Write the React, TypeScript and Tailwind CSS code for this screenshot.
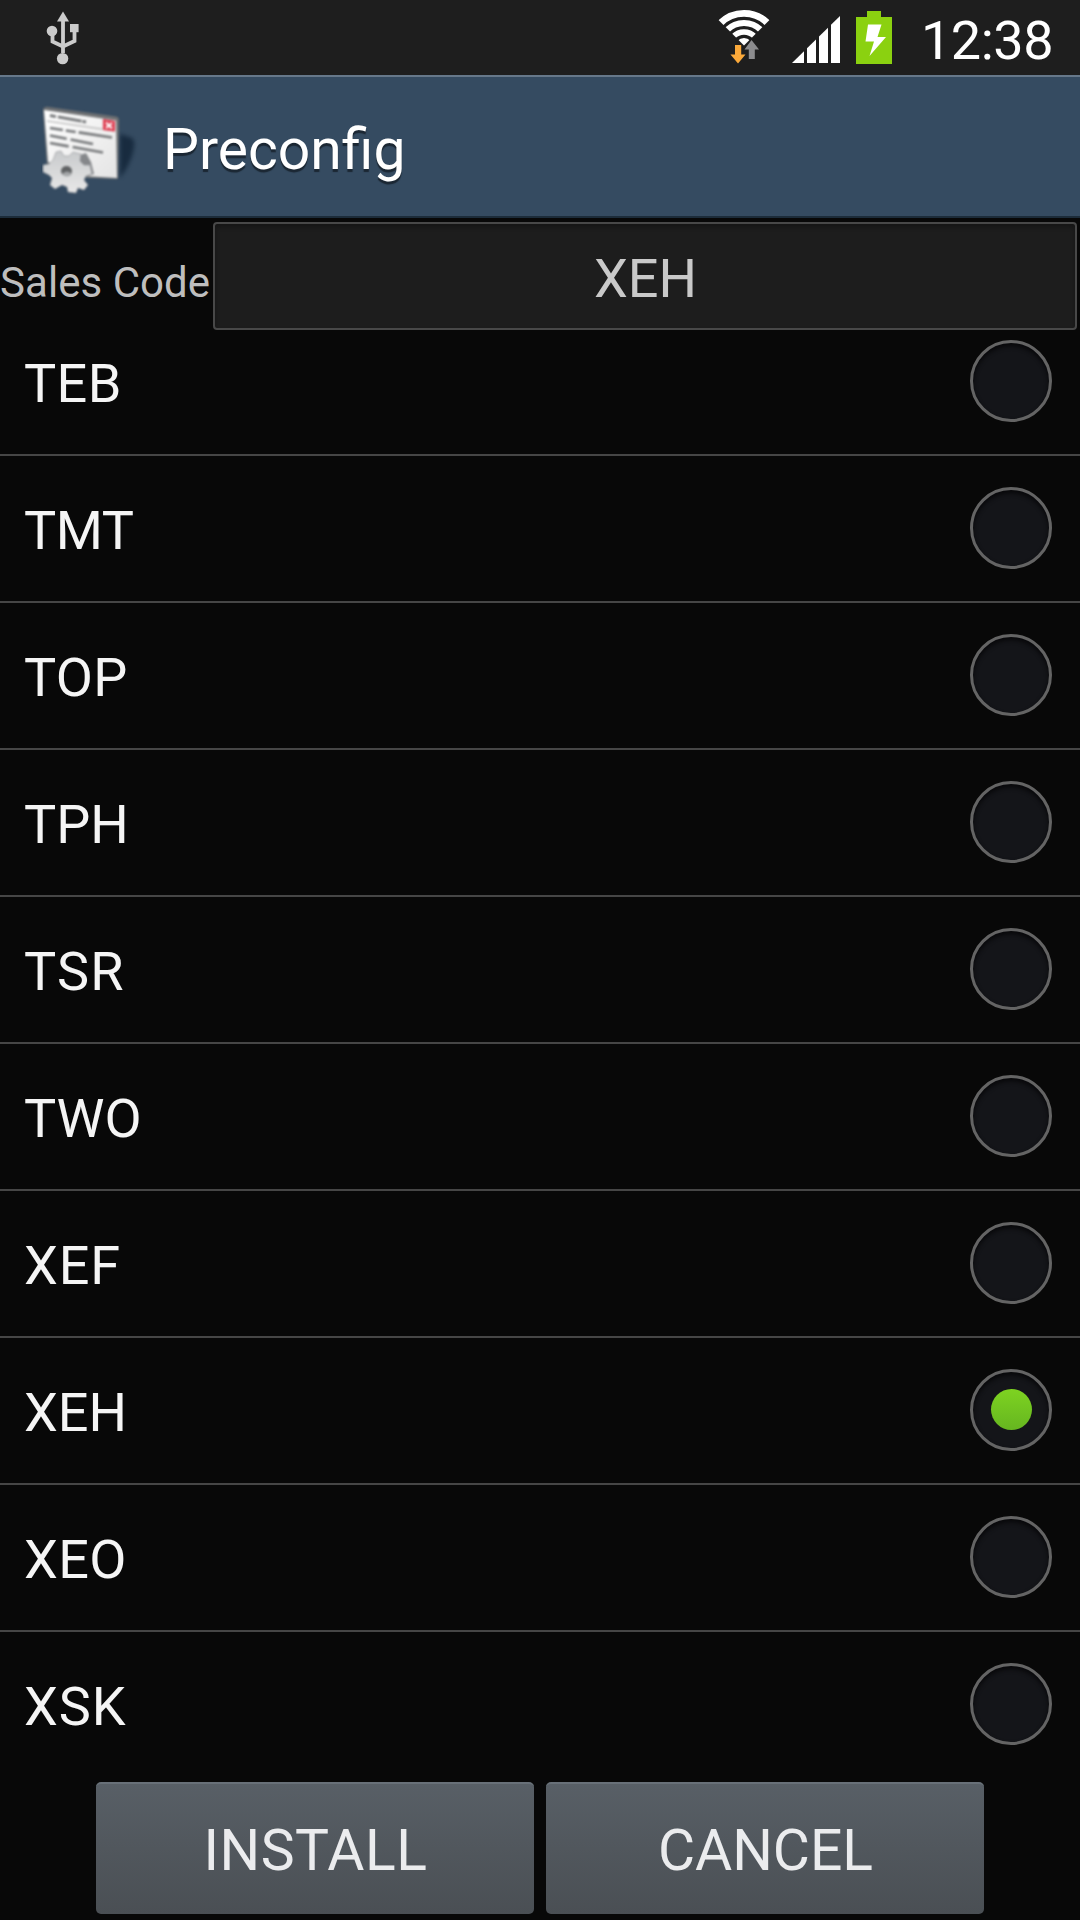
import { useState } from 'react';
import clsx from 'clsx';

const salesCodes = [
  { code: 'TEB', tracking: 'tracking-[0.4px]' },
  { code: 'TMT', tracking: 'tracking-[-0.4px]' },
  { code: 'TOP', tracking: 'tracking-[0.3px]' },
  { code: 'TPH', tracking: 'tracking-normal' },
  { code: 'TSR', tracking: 'tracking-[1.2px]' },
  { code: 'TWO', tracking: 'tracking-normal' },
  { code: 'XEF', tracking: 'tracking-[0.8px]' },
  { code: 'XEH', tracking: 'tracking-normal' },
  { code: 'XEO', tracking: 'tracking-[0.4px]' },
  { code: 'XSK', tracking: 'tracking-[0.9px]' },
];

const actions = [
  { label: 'INSTALL', tracking: 'tracking-[0.5px]' },
  { label: 'CANCEL', tracking: 'tracking-normal' },
];

function UsbIcon() {
  return (
    <svg width="34" height="54" viewBox="0 0 34 54" fill="none">
      <path d="M17 0.5 L23 10.5 H11 Z" fill="#cbcbcb" />
      <path d="M17 8 V42 M17 35.5 L6.5 30.5 V20 M17 35.5 L28.5 30 V18" stroke="#cbcbcb" strokeWidth="3.8" />
      <circle cx="6" cy="20" r="5.3" fill="#cbcbcb" />
      <rect x="24" y="13" width="8.6" height="8.2" fill="#cbcbcb" />
      <circle cx="16.6" cy="47.6" r="5.7" fill="#cbcbcb" />
    </svg>
  );
}

function WifiIcon() {
  return (
    <svg width="54" height="54" viewBox="0 0 54 54">
      <defs>
        <clipPath id="wifi-fan">
          <path d="M27 35.5 L-3 5.5 V-6 H57 V5.5 Z" />
        </clipPath>
      </defs>
      <g clipPath="url(#wifi-fan)" fill="none" stroke="#fff">
        <circle cx="27" cy="37" r="33.6" strokeWidth="6.8" />
        <circle cx="27" cy="37" r="24" strokeWidth="6.2" />
        <circle cx="27" cy="37" r="15" strokeWidth="5.6" />
        <circle cx="27" cy="37" r="4.5" strokeWidth="9" />
      </g>
      <path d="M34.5 30 L42 39.5 H37.8 V49 H31.8 V39.5 H27.5 Z" fill="#8c8c8e" />
      <path d="M18 35 H24.2 V44.5 H28.5 L21 53.5 L13.5 44.5 H18 Z" fill="#fba93a" />
    </svg>
  );
}

function SignalIcon() {
  return (
    <svg width="48" height="47" viewBox="0 0 48 47" fill="#fff">
      <path d="M0 47 L12 35.2 V47 Z" />
      <path d="M15 47 V32.3 L24 23.5 V47 Z" />
      <path d="M27 47 V20.5 L36 11.8 V47 Z" />
      <path d="M39 47 V8.8 L48 0 V47 Z" />
    </svg>
  );
}

function BatteryIcon() {
  return (
    <svg width="36" height="53" viewBox="0 0 36 53">
      <path d="M11 0 H25 V6 H36 V53 H0 V6 H11 Z" fill="#8bd110" />
      <path d="M12 13.5 H25.5 L21.5 26 H30 L13.5 45 L18 30.5 H9.5 Z" fill="#fff" />
    </svg>
  );
}

function PreconfigIcon() {
  return (
    <svg width="100" height="96" viewBox="0 0 100 96">
      <defs>
        <linearGradient id="paper" x1="0" y1="0" x2="1" y2="1">
          <stop offset="0" stopColor="#ffffff" />
          <stop offset="1" stopColor="#e4e4e4" />
        </linearGradient>
        <linearGradient id="gear" x1="0" y1="0" x2="0" y2="1">
          <stop offset="0" stopColor="#c8cacc" />
          <stop offset="1" stopColor="#e8e8e8" />
        </linearGradient>
        <filter id="soften" x="-20%" y="-20%" width="140%" height="140%" colorInterpolationFilters="sRGB">
          <feGaussianBlur stdDeviation="0.8" />
        </filter>
        <filter id="shade" x="-40%" y="-40%" width="180%" height="180%" colorInterpolationFilters="sRGB">
          <feGaussianBlur stdDeviation="2" />
        </filter>
      </defs>
      <path d="M78 30 L90 34 Q93 36 92 44 Q89 60 78 74 Z" fill="#15283c" opacity="0.9" filter="url(#shade)" />
      <g filter="url(#soften)">
        <path d="M1 5 Q3 2 7 3 L74 12.5 Q77 13 77 16 L76 75 L46 74 L5 62 Z" fill="#6f7173" />
        <path d="M2 6 L74 16.5 L75 74 L42 72 L6 58 Z" fill="url(#paper)" />
        <path d="M5 17 L73 27" stroke="#aaa" strokeWidth="1.2" />
        <path d="M8 11.5 L44 18" stroke="#77797b" strokeWidth="2.8" strokeDasharray="6 2 24 1 8" />
        <path d="M61 15 L73 17 V27.5 L61 26 Z" fill="#df3a4e" />
        <path d="M64 18.5 L70 24.5 M70 19 L64 24" stroke="#fff" strokeWidth="2" />
        <path d="M8 24 L70 33.5" stroke="#77797b" strokeWidth="2.6" strokeDasharray="13 3 10 3 40" />
        <path d="M8 31.5 L51 40" stroke="#77797b" strokeWidth="2.6" strokeDasharray="17 4 30" />
        <path d="M8 39 L61 48.5" stroke="#77797b" strokeWidth="2.6" strokeDasharray="19 4 40" />
        <path d="M35 52 L44 49 L49 58 L52 70 L44 73 Z" fill="#85878a" />
        <path
          d="M14 48 L19 47 L22 52 L27 52 L31 48 L39 50 L38 57 L42 61 L48 61 L50 70 L44 72 L42 76 L46 81 L42 86 L36 84 L34 89 L26 88 L25 83 L20 81 L13 85 L8 81 L10 74 L7 71 L1 68 L1 61 L7 60 L11 56 Z"
          fill="url(#gear)"
          stroke="#8f9194"
          strokeWidth="0.6"
        />
        <ellipse cx="24.5" cy="67" rx="5.5" ry="5" fill="#606264" />
        <path d="M20 70 Q25 65 30 70 Q25 75 20 70 Z" fill="#a4a6a8" />
      </g>
    </svg>
  );
}

function StatusBar() {
  return (
    <div className="flex h-[75px] shrink-0 items-start bg-[#1e1e1e]">
      <div className="ml-[46px] mt-[11px]">
        <UsbIcon />
      </div>
      <div className="ml-auto mt-[10px]">
        <WifiIcon />
      </div>
      <div className="ml-[21px] mt-[16px]">
        <SignalIcon />
      </div>
      <div className="ml-[16px] mt-[11px]">
        <BatteryIcon />
      </div>
      <span className="ml-[28px] mr-[27px] mt-[9px] w-[133px] whitespace-nowrap text-right text-[54px] leading-[64px] tracking-[-0.5px] text-white">12:38</span>
    </div>
  );
}

function Radio({ checked }: { checked: boolean }) {
  return (
    <span className="mb-[2px] flex size-[82px] items-center justify-center rounded-full border-[3px] border-[#646464] bg-[#141519] shadow-[inset_0_3px_4px_#08080a]">
      {checked && <span className="size-[41px] rounded-full bg-linear-to-b from-[#7ed321] to-[#66b620]" />}
    </span>
  );
}

export default function App() {
  const [selected, setSelected] = useState('XEH');

  return (
    <div className="flex h-[1920px] w-[1080px] flex-col overflow-hidden bg-[#080808] font-['Roboto',sans-serif]">
      <StatusBar />

      {/* Action bar */}
      <header className="flex h-[143px] shrink-0 items-center border-t-2 border-b-2 border-t-[#66788a] border-b-[#1c2c3a] bg-[#354b61]">
        <div className="ml-[42px] mt-[10px]">
          <PreconfigIcon />
        </div>
        <h1 className="ml-[21px] mt-[6px] text-[57px] leading-[68px] text-white [text-shadow:0_3px_1px_#1b2733]">Preconfig</h1>
      </header>

      {/* Current sales code */}
      <div className="flex h-[112px] shrink-0 pt-[4px]">
        <span className="mt-[36px] w-[213px] whitespace-nowrap text-[42px] leading-[50px] tracking-[0.05px] text-[#bebebe]">Sales Code</span>
        <div className="flex h-[108px] w-[864px] items-center justify-center rounded-[4px] border-2 border-[#484848] bg-[#1d1d1d] pl-px pt-[4px] text-[54px] text-[#c9c9c9] shadow-[inset_0_3px_4px_#151515]">
          {selected}
        </div>
      </div>

      {/* Scrolled list, the first row sits partly under the field */}
      <ul className="h-[1449px] shrink-0 overflow-hidden">
        {salesCodes.map(({ code, tracking }) => (
          <li
            key={code}
            onClick={() => setSelected(code)}
            className="flex h-[147px] items-center justify-between border-b-2 border-[#464646] pl-[24px] pr-[28px] first:-mt-[21px] last:border-transparent"
          >
            <span className={clsx('mt-[5px] text-[54px] leading-[64px] text-[#f5f5f5]', tracking)}>{code}</span>
            <Radio checked={code === selected} />
          </li>
        ))}
      </ul>

      {/* Actions */}
      <div className="flex gap-[12px] pl-[96px] pt-[3px]">
        {actions.map(({ label, tracking }) => (
          <button
            key={label}
            className={clsx(
              'h-[132px] w-[438px] rounded-[5px] border-t-2 border-[#687078] bg-linear-to-b from-[#585f66] to-[#4a4f54] pl-px pt-[4px] text-[57px] text-[#ebecee]',
              tracking
            )}
          >
            {label}
          </button>
        ))}
      </div>
    </div>
  );
}
